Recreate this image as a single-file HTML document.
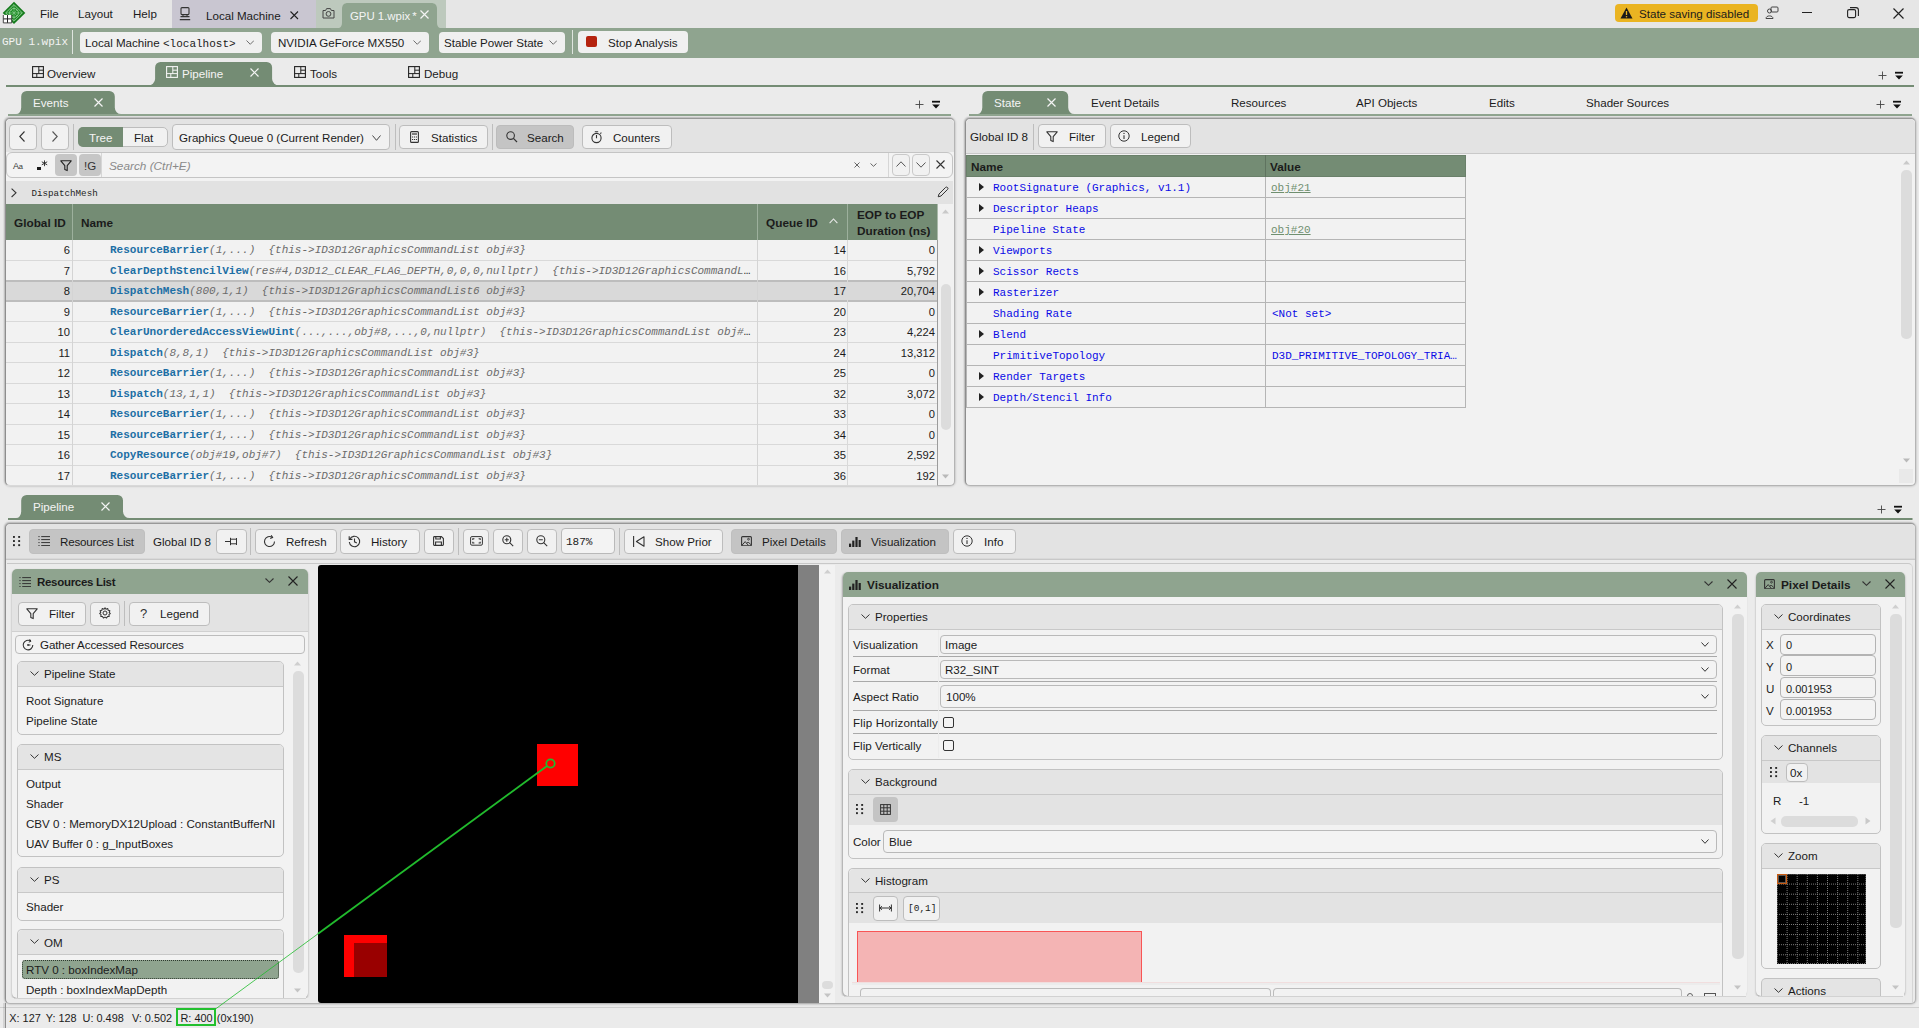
<!DOCTYPE html>
<html lang="en"><head><meta charset="utf-8"><title>PIX - GPU 1.wpix</title>
<style>
html,body{margin:0;padding:0}
body{width:1919px;height:1028px;overflow:hidden;background:#ebebeb;font-family:"Liberation Sans",sans-serif;font-size:12px;color:#1b1b1b;position:relative}
.abs{position:absolute}
.t{white-space:nowrap;line-height:16px;height:16px;font-size:11.6px}
.mono{font-family:"Liberation Mono","DejaVu Sans Mono",monospace;font-size:11px}
.b{font-weight:bold}
.wh{color:#f4f4f4}
.btn{border:1px solid #bdbdbd;border-radius:4px;background:#f1f1f1}
.btn.on{background:#c6c6c6;border-color:#c0c0c0}
.panel{border:1px solid #b4b4b4;border-left-color:#8e8e8e;border-top-color:#989898;border-radius:5px;background:#f2f2f2;box-shadow:0 0 2.5px rgba(0,0,0,.3),-1px -1px 1.5px rgba(0,0,0,.12)}
.grp{border:1px solid #c2c2c2;border-radius:5px;background:#f2f2f2;overflow:hidden}
.grph{background:#e4e4e4;border-bottom:1px solid #c8c8c8}
.inp{border:1px solid #b9b9b9;border-radius:4px;background:#f3f3f3}
.row{position:absolute;left:6px;width:931px;height:20px;border-bottom:1px solid #d9d9d9}
.row .id{position:absolute;right:867px;top:2px;font-size:11.2px}
.row .nm{position:absolute;left:104px;top:2px;width:642px;overflow:hidden;text-overflow:ellipsis}
.row .q{position:absolute;right:91px;top:2px;font-size:11.2px}
.row .e{position:absolute;right:2px;top:2px;font-size:11.2px}
.fn{color:#1d6fa5;font-weight:bold;font-style:normal}
.ar{color:#6b6b6b;font-style:italic}
.srow{position:absolute;left:966px;width:500px;height:20px;border-bottom:1px solid #b5b5b5;border-left:1px solid #b5b5b5;border-right:1px solid #b5b5b5;box-sizing:border-box;height:21px}
.srow .n{position:absolute;left:26px;top:3px;color:#0a0ae6}
.srow .v{position:absolute;left:305px;top:3px;color:#0a0ae6}
.srow .v.l{color:#6f8f6f;text-decoration:underline}
.srow .d{position:absolute;left:298px;top:0;width:1px;height:21px;background:#b5b5b5}
.srow .a{position:absolute;left:12px;top:6px;width:0;height:0;border-left:5px solid #222;border-top:4px solid transparent;border-bottom:4px solid transparent}
</style></head><body>

<div class="abs" style="left:0px;top:0px;width:1919px;height:28px;background:#e6e6e6"></div>
<svg class="abs" style="left:0px;top:0px" width="28" height="27" viewBox="0 0 28 27" >
<path d="M14 1.7 L25.3 12.9 L14 24.1 L2.7 12.9 Z" fill="#137a1a"/>
<path d="M14 4.6 L22.3 12.9 L14 21.2 L5.7 12.9 Z" fill="#1d8a24" stroke="#a5dba9" stroke-width="0.8"/>
<circle cx="14" cy="12.9" r="4.4" fill="none" stroke="#a5dba9" stroke-width="0.8"/>
<path d="M14 4.6 V21.2 M5.7 12.9 H22.3 M10.9 9.8 L17.1 16 M17.1 9.8 L10.9 16" stroke="#8fd094" stroke-width="0.6"/>
<rect x="3.3" y="14.9" width="8.4" height="8" fill="#ffffff"/>
<path d="M3.3 18.9 H11.7 M7.5 14.9 V22.9" stroke="#222" stroke-width="1"/>
<path d="M3.3 15 V22.9 H11.7 V15" stroke="#333" stroke-width="0.9" fill="none"/>
</svg>
<div class="abs t " style="left:40px;top:6px;">File</div>
<div class="abs t " style="left:78px;top:6px;">Layout</div>
<div class="abs t " style="left:133px;top:6px;">Help</div>
<div class="abs" style="left:172px;top:0px;width:144px;height:28px;background:#c9c6d1"></div>
<svg class="abs" style="left:179px;top:7px" width="12" height="14" viewBox="0 0 12 14" ><rect x="2" y="0.6" width="8" height="7" rx="1" fill="none" stroke="#333" stroke-width="1.1"/><path d="M1.5 9.6 H10.5 M0.8 12.6 H11.2" stroke="#333" stroke-width="1.2"/><path d="M4 7.6 V9.6 M8 7.6 V9.6" stroke="#333" stroke-width="1"/></svg>
<div class="abs t " style="left:206px;top:8px;">Local Machine</div>
<svg class="abs" style="left:290px;top:11px" width="8.5" height="8.5" viewBox="0 0 8.5 8.5" ><path d="M0.5 0.5 L8.0 8.0 M8.0 0.5 L0.5 8.0" stroke="#222" stroke-width="1.1" fill="none"/></svg>
<div class="abs" style="left:316px;top:0px;width:130px;height:28px;background:#bdc9bd"></div>
<svg class="abs" style="left:322px;top:7px" width="13" height="12" viewBox="0 0 13 12" ><path d="M1 3.5 H3.6 L4.6 1.6 H8.4 L9.4 3.5 H12 V11 H1 Z" fill="none" stroke="#444" stroke-width="1"/><circle cx="6.5" cy="6.9" r="2.4" fill="none" stroke="#444" stroke-width="1"/></svg>
<svg class="abs" style="left:0;top:0" width="460" height="29"><path d="M336 28.5 C341 28.5 342 26 342 22 L342 9 C342 5 344 3 348 3 L431 3 C435 3 437 5 437 9 L437 22 C437 26 438 28.5 443 28.5 Z" fill="#8fa48f"/></svg>
<div class="abs t wh" style="left:350px;top:8px;font-size:11.4px">GPU 1.wpix<span style="margin-left:2px">*</span></div>
<svg class="abs" style="left:420px;top:10px" width="9" height="9" viewBox="0 0 9 9" ><path d="M0.5 0.5 L8.5 8.5 M8.5 0.5 L0.5 8.5" stroke="#f4f4f4" stroke-width="1.2" fill="none"/></svg>
<div class="abs" style="left:1615px;top:4px;width:143px;height:18px;background:#eab422;border-radius:4px"></div>
<svg class="abs" style="left:1620px;top:7px" width="13" height="12" viewBox="0 0 13 12" ><path d="M6.5 0.5 L12.5 11.5 H0.5 Z" fill="#1a1a1a"/><path d="M6.5 4 V8" stroke="#eab422" stroke-width="1.3"/><circle cx="6.5" cy="9.7" r="0.8" fill="#eab422"/></svg>
<div class="abs t " style="left:1639px;top:5.5px;">State saving disabled</div>
<svg class="abs" style="left:1765px;top:6px" width="14" height="14" viewBox="0 0 14 14" ><rect x="6" y="1" width="7" height="5" rx="1" fill="none" stroke="#444" stroke-width="1"/><circle cx="4.5" cy="5" r="2" fill="none" stroke="#444" stroke-width="1"/><path d="M1 12.5 C1 9 8 9 8 12.5 Z" fill="none" stroke="#444" stroke-width="1"/></svg>
<div class="abs" style="left:1802px;top:12px;width:10px;height:1px;background:#222"></div>
<svg class="abs" style="left:1847px;top:7px" width="12" height="12" viewBox="0 0 12 12" ><rect x="0.6" y="2.6" width="8" height="8" rx="1.5" fill="none" stroke="#222" stroke-width="1.1"/><path d="M3 0.6 H9 Q11.4 0.6 11.4 3 V9" fill="none" stroke="#222" stroke-width="1.1"/></svg>
<svg class="abs" style="left:1893px;top:8px" width="11" height="11" viewBox="0 0 11 11" ><path d="M0.5 0.5 L10.5 10.5 M10.5 0.5 L0.5 10.5" stroke="#222" stroke-width="1.2" fill="none"/></svg>
<div class="abs" style="left:0px;top:28px;width:1919px;height:30px;background:#8fa48f"></div>
<div class="abs t mono" style="left:2px;top:34px;color:#f3f3f3;font-size:11px">GPU 1.wpix</div>
<div class="abs" style="left:72px;top:30px;width:1px;height:24px;background:#dfe5df"></div>
<div class="abs" style="left:80px;top:32px;width:182px;height:21px;background:#f0f0f0;border-radius:4px"></div><div class="abs t" style="left:85px;top:34.5px;font-size:11.6px">Local Machine <span class="mono" style="font-size:11px">&lt;localhost&gt;</span></div><svg class="abs" style="left:245.5px;top:40.0px" width="8.5" height="5" viewBox="0 0 8.5 5" ><path d="M0.5 0.5 L4.25 4.3 L8.0 0.5" stroke="#6f6f6f" stroke-width="1" fill="none"/></svg>
<div class="abs" style="left:271px;top:32px;width:158px;height:21px;background:#f0f0f0;border-radius:4px"></div><div class="abs t" style="left:278px;top:34.5px;font-size:11.6px">NVIDIA GeForce MX550</div><svg class="abs" style="left:412.5px;top:40.0px" width="8.5" height="5" viewBox="0 0 8.5 5" ><path d="M0.5 0.5 L4.25 4.3 L8.0 0.5" stroke="#6f6f6f" stroke-width="1" fill="none"/></svg>
<div class="abs" style="left:439px;top:32px;width:126px;height:21px;background:#f0f0f0;border-radius:4px"></div><div class="abs t" style="left:444px;top:34.5px;font-size:11.6px">Stable Power State</div><svg class="abs" style="left:548.5px;top:40.0px" width="8.5" height="5" viewBox="0 0 8.5 5" ><path d="M0.5 0.5 L4.25 4.3 L8.0 0.5" stroke="#6f6f6f" stroke-width="1" fill="none"/></svg>
<div class="abs" style="left:572px;top:30px;width:1px;height:24px;background:#dfe5df"></div>
<div class="abs" style="left:578px;top:31px;width:110px;height:22px;background:#f0f0f0;border-radius:4px"></div>
<div class="abs" style="left:586px;top:36px;width:11px;height:11px;background:#b5230f;border-radius:2px"></div>
<div class="abs t " style="left:608px;top:35px;">Stop Analysis</div>
<div class="abs" style="left:6px;top:85px;width:1908px;height:2px;background:#748c74"></div>
<svg class="abs" style="left:32px;top:66px" width="12" height="12" viewBox="0 0 12 12" ><rect x="0.6" y="0.6" width="10.8" height="10.8" fill="none" stroke="#222" stroke-width="1.1"/><path d="M6.8 0.6 V7.6 M0.6 7.6 H11.4 M4.8 7.6 V11.4 M6.8 4.2 H11.4" stroke="#222" stroke-width="1" fill="none"/></svg>
<div class="abs t " style="left:47px;top:65.5px;">Overview</div>
<svg class="abs" style="left:0;top:0" width="300" height="87"><path d="M147.6 85.5 A7.5 6.4 0 0 0 155.1 79.1 V67.4 A5.4 5.4 0 0 1 160.5 62 H266.70000000000005 A5.4 5.4 0 0 1 272.1 67.4 V79.1 A7.5 6.4 0 0 0 279.6 85.5 Z" fill="#748c74"/></svg>
<svg class="abs" style="left:166px;top:66px" width="12" height="12" viewBox="0 0 12 12" ><rect x="0.6" y="0.6" width="10.8" height="10.8" fill="none" stroke="#f4f4f4" stroke-width="1.1"/><path d="M6.8 0.6 V7.6 M0.6 7.6 H11.4 M4.8 7.6 V11.4 M6.8 4.2 H11.4" stroke="#f4f4f4" stroke-width="1" fill="none"/></svg>
<div class="abs t wh" style="left:182px;top:65.5px;">Pipeline</div>
<svg class="abs" style="left:250px;top:68px" width="9" height="9" viewBox="0 0 9 9" ><path d="M0.5 0.5 L8.5 8.5 M8.5 0.5 L0.5 8.5" stroke="#f4f4f4" stroke-width="1.2" fill="none"/></svg>
<svg class="abs" style="left:294px;top:66px" width="12" height="12" viewBox="0 0 12 12" ><rect x="0.6" y="0.6" width="10.8" height="10.8" fill="none" stroke="#222" stroke-width="1.1"/><path d="M6.8 0.6 V7.6 M0.6 7.6 H11.4 M4.8 7.6 V11.4 M6.8 4.2 H11.4" stroke="#222" stroke-width="1" fill="none"/></svg>
<div class="abs t " style="left:310px;top:65.5px;">Tools</div>
<svg class="abs" style="left:408px;top:66px" width="12" height="12" viewBox="0 0 12 12" ><rect x="0.6" y="0.6" width="10.8" height="10.8" fill="none" stroke="#222" stroke-width="1.1"/><path d="M6.8 0.6 V7.6 M0.6 7.6 H11.4 M4.8 7.6 V11.4 M6.8 4.2 H11.4" stroke="#222" stroke-width="1" fill="none"/></svg>
<div class="abs t " style="left:424px;top:65.5px;">Debug</div>
<svg class="abs" style="left:1878px;top:71px" width="9" height="9" viewBox="0 0 9 9" ><path d="M4.5 0.5 V8.5 M0.5 4.5 H8.5" stroke="#444" stroke-width="0.9" fill="none"/></svg><svg class="abs" style="left:1895px;top:71px" width="8" height="9" viewBox="0 0 8 9" ><path d="M0 1.7 H8" stroke="#111" stroke-width="1.8"/><path d="M0.2 4.5 H7.8 L4 8.6 Z" fill="#111"/></svg>
<svg class="abs" style="left:0;top:88px" width="960" height="28"><path d="M16.2 26 A5 6.4 0 0 0 21.2 19.6 V8.4 A5.4 5.4 0 0 1 26.6 3 H109.39999999999999 A5.4 5.4 0 0 1 114.8 8.4 V19.6 A6.3 6.4 0 0 0 121.1 26 Z" fill="#748c74"/><rect x="8" y="26" width="943" height="2" fill="#8fa48f"/></svg>
<div class="abs t wh" style="left:33px;top:95px;">Events</div>
<svg class="abs" style="left:94px;top:98px" width="9" height="9" viewBox="0 0 9 9" ><path d="M0.5 0.5 L8.5 8.5 M8.5 0.5 L0.5 8.5" stroke="#f4f4f4" stroke-width="1.2" fill="none"/></svg>
<svg class="abs" style="left:915px;top:100px" width="9" height="9" viewBox="0 0 9 9" ><path d="M4.5 0.5 V8.5 M0.5 4.5 H8.5" stroke="#444" stroke-width="0.9" fill="none"/></svg><svg class="abs" style="left:932px;top:100px" width="8" height="9" viewBox="0 0 8 9" ><path d="M0 1.7 H8" stroke="#111" stroke-width="1.8"/><path d="M0.2 4.5 H7.8 L4 8.6 Z" fill="#111"/></svg>
<div class="abs panel" style="left:5px;top:118px;width:948px;height:366px;overflow:hidden">
</div>
<div class="abs" style="left:6px;top:119px;width:948px;height:33px;background:#e3e3e3;border-radius:5px 5px 0 0"></div>
<div class="abs btn" style="left:9px;top:124px;width:26px;height:24px;"></div>
<svg class="abs" style="left:19px;top:131px" width="6" height="11" viewBox="0 0 6 11" ><path d="M5.5 0.5 L0.8 5.5 L5.5 10.5" fill="none" stroke="#333" stroke-width="1.1"/></svg>
<div class="abs btn" style="left:41px;top:124px;width:26px;height:24px;"></div>
<svg class="abs" style="left:52px;top:131px" width="6" height="11" viewBox="0 0 6 11" ><path d="M0.5 0.5 L5.2 5.5 L0.5 10.5" fill="none" stroke="#555" stroke-width="1.1"/></svg>
<div class="abs" style="left:73px;top:124px;width:1px;height:26px;background:#bdbdbd"></div>
<div class="abs" style="left:78px;top:127px;width:90px;height:20px;border:1px solid #bdbdbd;border-radius:5px;background:#f1f1f1;box-sizing:border-box"></div>
<div class="abs" style="left:78px;top:127px;width:45px;height:20px;background:#748c74;border-radius:5px 0 0 5px"></div>
<div class="abs t wh" style="left:89px;top:129.5px;">Tree</div>
<div class="abs t " style="left:134px;top:129.5px;">Flat</div>
<div class="abs btn" style="left:172px;top:124px;width:216px;height:24px;"></div>
<div class="abs t " style="left:179px;top:129.5px;">Graphics Queue 0 (Current Render)</div>
<svg class="abs" style="left:372px;top:135px" width="9" height="6" viewBox="0 0 9 6" ><path d="M0.5 0.5 L4.5 5.3 L8.5 0.5" stroke="#444" stroke-width="1" fill="none"/></svg>
<div class="abs" style="left:395px;top:124px;width:1px;height:26px;background:#bdbdbd"></div>
<div class="abs btn" style="left:399px;top:125px;width:87px;height:22px;"></div>
<svg class="abs" style="left:410px;top:131px" width="9" height="12" viewBox="0 0 9 12" ><rect x="0.6" y="0.6" width="7.8" height="10.8" rx="1" fill="none" stroke="#333" stroke-width="1.1"/><path d="M2 3 H7" stroke="#333" stroke-width="1.2"/><path d="M2 6 H7 M2 8.5 H7" stroke="#333" stroke-width="1.2" stroke-dasharray="1.2 0.8"/></svg>
<div class="abs t " style="left:431px;top:129.5px;">Statistics</div>
<div class="abs" style="left:492px;top:124px;width:1px;height:26px;background:#bdbdbd"></div>
<div class="abs btn" style="left:496px;top:125px;width:76px;height:22px;background:#c4c4c4;border-color:#bcbcbc"></div>
<svg class="abs" style="left:506px;top:131px" width="12" height="12" viewBox="0 0 12 12" ><circle cx="4.6" cy="4.6" r="3.8" fill="none" stroke="#333" stroke-width="1.1"/><path d="M7.4 7.4 L11 11" stroke="#333" stroke-width="1.2"/></svg>
<div class="abs t " style="left:527px;top:129.5px;">Search</div>
<div class="abs btn" style="left:582px;top:125px;width:88px;height:22px;"></div>
<svg class="abs" style="left:591px;top:131px" width="12" height="13" viewBox="0 0 12 13" ><circle cx="5.5" cy="7" r="4.6" fill="none" stroke="#333" stroke-width="1.1"/><path d="M5.5 4 V7.2 M3.8 0.7 H7.2 M9.3 2.6 L10.4 1.6" stroke="#333" stroke-width="1.1" fill="none"/></svg>
<div class="abs t " style="left:613px;top:129.5px;">Counters</div>
<div class="abs" style="left:6px;top:152px;width:947px;height:26px;border:1px solid #c4c4c4;border-radius:6px;background:#f3f3f3;box-sizing:border-box"></div>
<div class="abs t " style="left:13px;top:157.5px;font-size:9px;color:#333;letter-spacing:-0.3px">A<span style="font-size:7.5px">a</span></div>
<div class="abs" style="left:37.2px;top:166.5px;width:3.4px;height:3.2px;background:#1a1a1a"></div>
<svg class="abs" style="left:41px;top:160px" width="7" height="7" viewBox="0 0 7 7" ><path d="M3.5 0.4 V6.2 M0.8 1.8 L6.2 4.8 M6.2 1.8 L0.8 4.8" stroke="#222" stroke-width="0.9" fill="none"/></svg>
<div class="abs" style="left:55px;top:154px;width:22px;height:22px;background:#c6c6c6;border-radius:4px"></div>
<svg class="abs" style="left:60px;top:160px" width="12" height="12" viewBox="0 0 12 12" ><path d="M0.8 0.8 H11.2 L7.2 5.6 V10.6 L4.8 9.4 V5.6 Z" fill="none" stroke="#222" stroke-width="1.1" stroke-linejoin="round"/></svg>
<div class="abs" style="left:79px;top:154px;width:22px;height:22px;background:#c6c6c6;border-radius:4px"></div>
<div class="abs t " style="left:84px;top:157.5px;font-size:11.5px;color:#333">!G</div>
<div class="abs" style="left:101px;top:153px;width:1px;height:24px;background:#d6d6d6"></div>
<div class="abs t " style="left:109px;top:157.5px;font-style:italic;color:#8a8a8a;font-size:11.8px">Search (Ctrl+E)</div>
<svg class="abs" style="left:854px;top:162px" width="6" height="6" viewBox="0 0 6 6" ><path d="M0.5 0.5 L5.5 5.5 M5.5 0.5 L0.5 5.5" stroke="#555" stroke-width="0.9" fill="none"/></svg>
<svg class="abs" style="left:870px;top:163px" width="7" height="4" viewBox="0 0 7 4" ><path d="M0.5 0.5 L3.5 3.3 L6.5 0.5" stroke="#555" stroke-width="0.9" fill="none"/></svg>
<div class="abs" style="left:888px;top:153px;width:1px;height:24px;background:#d6d6d6"></div>
<div class="abs btn" style="left:892px;top:154px;width:16px;height:20px;border-color:#c9c9c9"></div>
<svg class="abs" style="left:896px;top:161px" width="10" height="6" viewBox="0 0 10 6" ><path d="M0.5 5.5 L5 0.8 L9.5 5.5" fill="none" stroke="#555" stroke-width="1"/></svg>
<div class="abs btn" style="left:912px;top:154px;width:16px;height:20px;border-color:#c9c9c9"></div>
<svg class="abs" style="left:916px;top:162px" width="10" height="6" viewBox="0 0 10 6" ><path d="M0.5 0.5 L5 5.2 L9.5 0.5" fill="none" stroke="#555" stroke-width="1"/></svg>
<svg class="abs" style="left:936px;top:160px" width="9" height="9" viewBox="0 0 9 9" ><path d="M0.5 0.5 L8.5 8.5 M8.5 0.5 L0.5 8.5" stroke="#333" stroke-width="1.1" fill="none"/></svg>
<div class="abs" style="left:6px;top:181px;width:947px;height:23px;background:#e2e2e2"></div>
<svg class="abs" style="left:11.4px;top:188.3px" width="6" height="10" viewBox="0 0 6 10" ><path d="M0.6 0.6 L5 4.8 L0.6 9" fill="none" stroke="#333" stroke-width="1.1"/></svg>
<div class="abs t mono" style="left:31.5px;top:186px;font-size:9.2px;color:#222">DispatchMesh</div>
<svg class="abs" style="left:937px;top:186px" width="12" height="12" viewBox="0 0 12 12" ><path d="M1.2 10.8 L2 8 L8.6 1.4 Q9.6 0.6 10.6 1.6 Q11.4 2.6 10.6 3.4 L4 10 Z" fill="none" stroke="#333" stroke-width="1"/></svg>
<div class="abs" style="left:6px;top:204px;width:931px;height:36px;background:#748c74"></div>
<div class="abs" style="left:72px;top:204px;width:1px;height:36px;background:#9db09d"></div>
<div class="abs" style="left:757px;top:204px;width:1px;height:36px;background:#9db09d"></div>
<div class="abs" style="left:847px;top:204px;width:1px;height:36px;background:#9db09d"></div>
<div class="abs t b" style="left:14px;top:214.5px;font-size:11.8px">Global ID</div>
<div class="abs t b" style="left:81px;top:214.5px;font-size:11.8px">Name</div>
<div class="abs t b" style="left:766px;top:214.5px;font-size:11.8px">Queue ID</div>
<svg class="abs" style="left:829px;top:218px" width="9" height="6" viewBox="0 0 9 6" ><path d="M0.6 5.2 L4.5 1 L8.4 5.2" fill="none" stroke="#e8e8e8" stroke-width="1.1"/></svg>
<div class="abs t b" style="left:857px;top:207px;font-size:11.8px">EOP to EOP</div>
<div class="abs t b" style="left:857px;top:222.5px;font-size:11.8px">Duration (ns)</div>
<div class="row" style="top:240px;height:20px;"><span class="id t" style="">6</span><span class="nm t mono" style="white-space:pre;"><span class="fn">ResourceBarrier</span><span class="ar">(1,...)  {this-&gt;ID3D12GraphicsCommandList obj#3}</span></span><span class="q t" style="">14</span><span class="e t" style="">0</span></div>
<div class="row" style="top:261px;height:19px;"><span class="id t" style="">7</span><span class="nm t mono" style="white-space:pre;"><span class="fn">ClearDepthStencilView</span><span class="ar">(res#4,D3D12_CLEAR_FLAG_DEPTH,0,0,0,nullptr)  {this-&gt;ID3D12GraphicsCommandList obj#3}</span></span><span class="q t" style="">16</span><span class="e t" style="">5,792</span></div>
<div class="row" style="top:280px;height:18px;background:#d9d9d9;border-top:2px solid #bdbdbd;border-bottom:2px solid #bdbdbd;"><span class="id t" style="top:1px">8</span><span class="nm t mono" style="white-space:pre;top:1px"><span class="fn">DispatchMesh</span><span class="ar">(800,1,1)  {this-&gt;ID3D12GraphicsCommandList6 obj#3}</span></span><span class="q t" style="top:1px">17</span><span class="e t" style="top:1px">20,704</span></div>
<div class="row" style="top:302px;height:19px;"><span class="id t" style="">9</span><span class="nm t mono" style="white-space:pre;"><span class="fn">ResourceBarrier</span><span class="ar">(1,...)  {this-&gt;ID3D12GraphicsCommandList obj#3}</span></span><span class="q t" style="">20</span><span class="e t" style="">0</span></div>
<div class="row" style="top:322px;height:20px;"><span class="id t" style="">10</span><span class="nm t mono" style="white-space:pre;"><span class="fn">ClearUnorderedAccessViewUint</span><span class="ar">(...,...,obj#8,...,0,nullptr)  {this-&gt;ID3D12GraphicsCommandList obj#3}</span></span><span class="q t" style="">23</span><span class="e t" style="">4,224</span></div>
<div class="row" style="top:343px;height:19px;"><span class="id t" style="">11</span><span class="nm t mono" style="white-space:pre;"><span class="fn">Dispatch</span><span class="ar">(8,8,1)  {this-&gt;ID3D12GraphicsCommandList obj#3}</span></span><span class="q t" style="">24</span><span class="e t" style="">13,312</span></div>
<div class="row" style="top:363px;height:20px;"><span class="id t" style="">12</span><span class="nm t mono" style="white-space:pre;"><span class="fn">ResourceBarrier</span><span class="ar">(1,...)  {this-&gt;ID3D12GraphicsCommandList obj#3}</span></span><span class="q t" style="">25</span><span class="e t" style="">0</span></div>
<div class="row" style="top:384px;height:19px;"><span class="id t" style="">13</span><span class="nm t mono" style="white-space:pre;"><span class="fn">Dispatch</span><span class="ar">(13,1,1)  {this-&gt;ID3D12GraphicsCommandList obj#3}</span></span><span class="q t" style="">32</span><span class="e t" style="">3,072</span></div>
<div class="row" style="top:404px;height:20px;"><span class="id t" style="">14</span><span class="nm t mono" style="white-space:pre;"><span class="fn">ResourceBarrier</span><span class="ar">(1,...)  {this-&gt;ID3D12GraphicsCommandList obj#3}</span></span><span class="q t" style="">33</span><span class="e t" style="">0</span></div>
<div class="row" style="top:425px;height:19px;"><span class="id t" style="">15</span><span class="nm t mono" style="white-space:pre;"><span class="fn">ResourceBarrier</span><span class="ar">(1,...)  {this-&gt;ID3D12GraphicsCommandList obj#3}</span></span><span class="q t" style="">34</span><span class="e t" style="">0</span></div>
<div class="row" style="top:445px;height:20px;"><span class="id t" style="">16</span><span class="nm t mono" style="white-space:pre;"><span class="fn">CopyResource</span><span class="ar">(obj#19,obj#7)  {this-&gt;ID3D12GraphicsCommandList obj#3}</span></span><span class="q t" style="">35</span><span class="e t" style="">2,592</span></div>
<div class="row" style="top:466px;height:19px;"><span class="id t" style="">17</span><span class="nm t mono" style="white-space:pre;"><span class="fn">ResourceBarrier</span><span class="ar">(1,...)  {this-&gt;ID3D12GraphicsCommandList obj#3}</span></span><span class="q t" style="">36</span><span class="e t" style="">192</span></div>
<div class="abs" style="left:72px;top:240px;width:1px;height:245px;background:#d4d4d4"></div>
<div class="abs" style="left:757px;top:240px;width:1px;height:245px;background:#d4d4d4"></div>
<div class="abs" style="left:847px;top:240px;width:1px;height:245px;background:#d9d9d9"></div>
<div class="abs" style="left:937px;top:204px;width:1px;height:36px;background:#a9b8a9"></div>
<div class="abs" style="left:937px;top:240px;width:1px;height:245px;background:#9c9c9c"></div>
<div class="abs" style="left:938px;top:204px;width:15px;height:280px;background:#f1f1f1;border-radius:0 0 4px 0"></div>
<svg class="abs" style="left:942px;top:209px" width="7" height="5" viewBox="0 0 7 5" ><path d="M3.5 0.5 L7 4.5 H0 Z" fill="#c9c9c9"/></svg>
<svg class="abs" style="left:942px;top:474px" width="7" height="5" viewBox="0 0 7 5" ><path d="M3.5 4.5 L7 0.5 H0 Z" fill="#b9b9b9"/></svg>
<div class="abs" style="left:941px;top:284px;width:10px;height:146px;background:#dcdcdc;border-radius:5px"></div>
<svg class="abs" style="left:960px;top:88px" width="959" height="28"><path d="M17.3 26 A5 6.4 0 0 0 22.3 19.6 V8.4 A5.4 5.4 0 0 1 27.700000000000003 3 H102.8 A5.4 5.4 0 0 1 108.2 8.4 V19.6 A6 6.4 0 0 0 114.2 26 Z" fill="#748c74"/><rect x="9" y="26" width="943" height="2" fill="#8fa48f"/></svg>
<div class="abs t wh" style="left:994px;top:95px;">State</div>
<svg class="abs" style="left:1047px;top:98px" width="9" height="9" viewBox="0 0 9 9" ><path d="M0.5 0.5 L8.5 8.5 M8.5 0.5 L0.5 8.5" stroke="#f4f4f4" stroke-width="1.2" fill="none"/></svg>
<div class="abs t " style="left:1091px;top:95px;">Event Details</div>
<div class="abs t " style="left:1231px;top:95px;">Resources</div>
<div class="abs t " style="left:1356px;top:95px;">API Objects</div>
<div class="abs t " style="left:1489px;top:95px;">Edits</div>
<div class="abs t " style="left:1586px;top:95px;">Shader Sources</div>
<svg class="abs" style="left:1876px;top:100px" width="9" height="9" viewBox="0 0 9 9" ><path d="M4.5 0.5 V8.5 M0.5 4.5 H8.5" stroke="#444" stroke-width="0.9" fill="none"/></svg><svg class="abs" style="left:1893px;top:100px" width="8" height="9" viewBox="0 0 8 9" ><path d="M0 1.7 H8" stroke="#111" stroke-width="1.8"/><path d="M0.2 4.5 H7.8 L4 8.6 Z" fill="#111"/></svg>
<div class="abs panel" style="left:965px;top:118px;width:949px;height:366px"></div>
<div class="abs" style="left:966px;top:119px;width:949px;height:34px;background:#e3e3e3;border-radius:5px 5px 0 0;border-bottom:1px solid #c9c9c9"></div>
<div class="abs t " style="left:970px;top:129px;">Global ID 8</div>
<div class="abs" style="left:1033px;top:124px;width:1px;height:26px;background:#bdbdbd"></div>
<div class="abs btn" style="left:1038px;top:124px;width:66px;height:22px;"></div>
<svg class="abs" style="left:1046px;top:131px" width="12" height="12" viewBox="0 0 12 12" ><path d="M0.8 0.8 H11.2 L7.2 5.6 V10.6 L4.8 9.4 V5.6 Z" fill="none" stroke="#333" stroke-width="1.1" stroke-linejoin="round"/></svg>
<div class="abs t " style="left:1069px;top:129px;">Filter</div>
<div class="abs btn" style="left:1110px;top:124px;width:79px;height:22px;"></div>
<svg class="abs" style="left:1118px;top:130px" width="12" height="12" viewBox="0 0 12 12" ><circle cx="6" cy="6" r="5.2" fill="none" stroke="#333" stroke-width="1"/><path d="M6 5.2 V9" stroke="#333" stroke-width="1.1"/><circle cx="6" cy="3.4" r="0.7" fill="#333"/></svg>
<div class="abs t " style="left:1141px;top:129px;">Legend</div>
<div class="abs" style="left:966px;top:155px;width:500px;height:22px;background:#748c74;border:1px solid #6a806a;box-sizing:border-box"></div>
<div class="abs" style="left:1265px;top:155px;width:1px;height:22px;background:#5f735f"></div>
<div class="abs t b" style="left:971px;top:159px;font-size:11.8px">Name</div>
<div class="abs t b" style="left:1270px;top:159px;font-size:11.8px">Value</div>
<div class="srow" style="top:177px"><span class="a"></span><span class="n t mono">RootSignature (Graphics, v1.1)</span><span class="d"></span><span class="v t mono l" style="left:304px">obj#21</span></div>
<div class="srow" style="top:198px"><span class="a"></span><span class="n t mono">Descriptor Heaps</span><span class="d"></span></div>
<div class="srow" style="top:219px"><span class="n t mono">Pipeline State</span><span class="d"></span><span class="v t mono l" style="left:304px">obj#20</span></div>
<div class="srow" style="top:240px"><span class="a"></span><span class="n t mono">Viewports</span><span class="d"></span></div>
<div class="srow" style="top:261px"><span class="a"></span><span class="n t mono">Scissor Rects</span><span class="d"></span></div>
<div class="srow" style="top:282px"><span class="a"></span><span class="n t mono">Rasterizer</span><span class="d"></span></div>
<div class="srow" style="top:303px"><span class="n t mono">Shading Rate</span><span class="d"></span><span class="v t mono " style="left:305px">&lt;Not set&gt;</span></div>
<div class="srow" style="top:324px"><span class="a"></span><span class="n t mono">Blend</span><span class="d"></span></div>
<div class="srow" style="top:345px"><span class="n t mono">PrimitiveTopology</span><span class="d"></span><span class="v t mono " style="left:305px">D3D_PRIMITIVE_TOPOLOGY_TRIA…</span></div>
<div class="srow" style="top:366px"><span class="a"></span><span class="n t mono">Render Targets</span><span class="d"></span></div>
<div class="srow" style="top:387px"><span class="a"></span><span class="n t mono">Depth/Stencil Info</span><span class="d"></span></div>
<svg class="abs" style="left:1903px;top:160px" width="7" height="5" viewBox="0 0 7 5" ><path d="M3.5 0.5 L7 4.5 H0 Z" fill="#c9c9c9"/></svg>
<svg class="abs" style="left:1903px;top:458px" width="7" height="5" viewBox="0 0 7 5" ><path d="M3.5 4.5 L7 0.5 H0 Z" fill="#b9b9b9"/></svg>
<div class="abs" style="left:1901px;top:170px;width:11px;height:169px;background:#dcdcdc;border-radius:5px"></div>
<div class="abs" style="left:1899px;top:469px;width:14px;height:14px;background:#e9e9e9"></div>
<svg class="abs" style="left:0;top:492px" width="1919" height="29"><path d="M16.2 26 A5 6.4 0 0 0 21.2 19.6 V8.4 A5.4 5.4 0 0 1 26.6 3 H117.6 A5.4 5.4 0 0 1 123 8.4 V19.6 A6.5 6.4 0 0 0 129.5 26 Z" fill="#748c74"/><rect x="8" y="26" width="1904.5" height="2" fill="#748c74"/></svg>
<div class="abs t wh" style="left:33px;top:499px;">Pipeline</div>
<svg class="abs" style="left:101px;top:502px" width="9" height="9" viewBox="0 0 9 9" ><path d="M0.5 0.5 L8.5 8.5 M8.5 0.5 L0.5 8.5" stroke="#f4f4f4" stroke-width="1.2" fill="none"/></svg>
<svg class="abs" style="left:1876.5px;top:504.5px" width="9" height="9" viewBox="0 0 9 9" ><path d="M4.5 0.5 V8.5 M0.5 4.5 H8.5" stroke="#444" stroke-width="0.9" fill="none"/></svg><svg class="abs" style="left:1893.5px;top:504.5px" width="8" height="9" viewBox="0 0 8 9" ><path d="M0 1.7 H8" stroke="#111" stroke-width="1.8"/><path d="M0.2 4.5 H7.8 L4 8.6 Z" fill="#111"/></svg>
<div class="abs panel" style="left:5px;top:523px;width:1909px;height:479px;background:#ebebeb"></div>
<div class="abs" style="left:6px;top:524px;width:1909px;height:34px;background:#e3e3e3;border-radius:5px 5px 0 0"></div>
<div class="abs" style="left:6px;top:558px;width:1909px;height:1px;background:#d9d9d9"></div>
<div class="abs" style="left:6px;top:559px;width:1909px;height:1px;background:#c8c8c8"></div>
<div class="abs" style="left:6px;top:560px;width:1909px;height:3px;background:#ebebeb"></div>
<div class="abs" style="left:7px;top:563px;width:1906px;height:440px;border-top:1px solid #c8c8c8;border-right:1px solid #d6d6d6;border-radius:0 5px 0 0;box-sizing:border-box"></div>
<svg class="abs" style="left:13px;top:536px" width="8" height="11" viewBox="0 0 8 11" ><rect x="0" y="0" width="1.9" height="1.9" fill="#2a2a2a"/><rect x="5.2" y="0" width="1.9" height="1.9" fill="#2a2a2a"/><rect x="0" y="4.1" width="1.9" height="1.9" fill="#2a2a2a"/><rect x="5.2" y="4.1" width="1.9" height="1.9" fill="#2a2a2a"/><rect x="0" y="8.2" width="1.9" height="1.9" fill="#2a2a2a"/><rect x="5.2" y="8.2" width="1.9" height="1.9" fill="#2a2a2a"/></svg>
<div class="abs btn" style="left:29px;top:529px;width:114px;height:23px;background:#c4c4c4;border-color:#bfbfbf"></div>
<svg class="abs" style="left:38px;top:536px" width="12" height="10.2" viewBox="0 0 12 10.2" ><path d="M3.2 0.6 H12 M0.4 0.6 H1.6 M3.2 3.6 H12 M0.4 3.6 H1.6 M3.2 6.6 H12 M0.4 6.6 H1.6 M3.2 9.6 H12 M0.4 9.6 H1.6 " stroke="#333" stroke-width="1"/></svg>
<div class="abs t " style="left:60px;top:534px;letter-spacing:-0.2px">Resources List</div>
<div class="abs t " style="left:153px;top:534px;">Global ID 8</div>
<div class="abs btn" style="left:216px;top:529px;width:29px;height:23px;"></div>
<svg class="abs" style="left:225px;top:536.5px" width="13" height="9" viewBox="0 0 13 9" ><path d="M0 4.5 H5.5 M5.5 0.8 V8.2 M5.5 2.2 H11.5 M5.5 6.8 H11.5 M11.5 1 V8" fill="none" stroke="#333" stroke-width="1"/></svg>
<div class="abs" style="left:250px;top:528px;width:1px;height:27px;background:#bdbdbd"></div>
<div class="abs btn" style="left:255px;top:529px;width:80px;height:23px;"></div>
<svg class="abs" style="left:263px;top:534.5px" width="13" height="13" viewBox="0 0 13 13" ><path d="M11.5 6.5 A5 5 0 1 1 9.2 2.3" fill="none" stroke="#333" stroke-width="1.1"/><path d="M8.2 0.3 L9.6 2.5 L7.2 3.4" fill="none" stroke="#333" stroke-width="1.1"/></svg>
<div class="abs t " style="left:286px;top:534px;">Refresh</div>
<div class="abs btn" style="left:340px;top:529px;width:78px;height:23px;"></div>
<svg class="abs" style="left:348px;top:534.5px" width="13" height="13" viewBox="0 0 13 13" ><path d="M1.8 4.2 A5.2 5.2 0 1 1 1.3 7" fill="none" stroke="#333" stroke-width="1.1"/><path d="M1.2 1.2 V4.4 H4.4" fill="none" stroke="#333" stroke-width="1.1"/><path d="M6.5 3.5 V6.8 L8.8 8" fill="none" stroke="#333" stroke-width="1.1"/></svg>
<div class="abs t " style="left:371px;top:534px;">History</div>
<div class="abs btn" style="left:424px;top:529px;width:28px;height:23px;"></div>
<svg class="abs" style="left:433.3px;top:536.3px" width="11" height="10" viewBox="0 0 11 10" ><path d="M0.6 1.4 Q0.6 0.6 1.4 0.6 H8.4 L10.4 2.6 V8.6 Q10.4 9.4 9.6 9.4 H1.4 Q0.6 9.4 0.6 8.6 Z" fill="none" stroke="#333" stroke-width="1.1"/><path d="M2.8 0.6 V3 H7.4 V0.6 M2.6 9.4 V6 H8.4 V9.4" fill="none" stroke="#333" stroke-width="1.1"/></svg>
<div class="abs" style="left:458px;top:528px;width:1px;height:27px;background:#bdbdbd"></div>
<div class="abs btn" style="left:463px;top:529px;width:24px;height:23px;"></div>
<svg class="abs" style="left:469.5px;top:536.3px" width="13" height="10" viewBox="0 0 13 10" ><rect x="0.6" y="0.6" width="11.8" height="8.6" rx="1.3" fill="none" stroke="#333" stroke-width="1"/><path d="M2.8 4 V2.8 H4.4 M8.6 2.8 H10.2 V4 M10.2 5.8 V7 H8.6 M4.4 7 H2.8 V5.8" fill="none" stroke="#333" stroke-width="1.1"/></svg>
<div class="abs btn" style="left:493px;top:529px;width:28px;height:23px;"></div>
<svg class="abs" style="left:502px;top:535px" width="12" height="12" viewBox="0 0 12 12" ><circle cx="4.8" cy="4.8" r="4" fill="none" stroke="#333" stroke-width="1.1"/><path d="M7.7 7.7 L11.2 11.2 M2.8 4.8 H6.8 M4.8 2.8 V6.8" stroke="#333" stroke-width="1.1"/></svg>
<div class="abs btn" style="left:527px;top:529px;width:28px;height:23px;"></div>
<svg class="abs" style="left:536px;top:535px" width="12" height="12" viewBox="0 0 12 12" ><circle cx="4.8" cy="4.8" r="4" fill="none" stroke="#333" stroke-width="1.1"/><path d="M7.7 7.7 L11.2 11.2 M2.8 4.8 H6.8" stroke="#333" stroke-width="1.1"/></svg>
<div class="abs" style="left:561px;top:528px;width:54px;height:26px;border:1px solid #b9b9b9;border-radius:4px;background:#f3f3f3;box-sizing:border-box"></div>
<div class="abs t mono" style="left:566px;top:534px;font-size:11px">187%</div>
<div class="abs" style="left:619px;top:528px;width:1px;height:27px;background:#bdbdbd"></div>
<div class="abs btn" style="left:624px;top:529px;width:97px;height:23px;"></div>
<svg class="abs" style="left:633px;top:536px" width="12" height="11" viewBox="0 0 12 11" ><path d="M0.6 0 V11" stroke="#333" stroke-width="1.1"/><path d="M11 0.8 V10.2 L3.4 5.5 Z" fill="none" stroke="#333" stroke-width="1.1" stroke-linejoin="round"/></svg>
<div class="abs t " style="left:655px;top:534px;">Show Prior</div>
<div class="abs btn" style="left:731px;top:529px;width:104px;height:23px;background:#c4c4c4;border-color:#bfbfbf"></div>
<svg class="abs" style="left:740.8px;top:535.8px" width="11" height="10.4" viewBox="0 0 11 10.4" ><rect x="0.6" y="0.6" width="9.8" height="9.2" rx="1" fill="none" stroke="#333" stroke-width="1.1"/><path d="M1 9.2 L4.2 5.6 L7.4 9.4 M5.8 7.4 L7.2 6 L10 8.8" fill="none" stroke="#333" stroke-width="1"/><circle cx="7.5" cy="3.2" r="0.9" fill="none" stroke="#333" stroke-width="0.9"/></svg>
<div class="abs t " style="left:762px;top:534px;">Pixel Details</div>
<div class="abs btn" style="left:841px;top:529px;width:106px;height:23px;background:#c4c4c4;border-color:#bfbfbf"></div>
<svg class="abs" style="left:849.3px;top:536.8px" width="12" height="10" viewBox="0 0 12 10" ><rect x="0" y="6.6" width="2.2" height="3.4" fill="#222"/><rect x="3.2" y="3.6" width="2.2" height="6.4" fill="#222"/><rect x="6.4" y="0" width="2.2" height="10" fill="#222"/><rect x="9.6" y="3" width="2.2" height="7" fill="#222"/></svg>
<div class="abs t " style="left:871px;top:534px;">Visualization</div>
<div class="abs btn" style="left:953px;top:529px;width:61px;height:23px;"></div>
<svg class="abs" style="left:961px;top:535px" width="12" height="12" viewBox="0 0 12 12" ><circle cx="6" cy="6" r="5.2" fill="none" stroke="#333" stroke-width="1"/><path d="M6 5.2 V9" stroke="#333" stroke-width="1.1"/><circle cx="6" cy="3.4" r="0.7" fill="#333"/></svg>
<div class="abs t " style="left:984px;top:534px;">Info</div>
<div class="abs" style="left:12px;top:569px;width:296px;height:429px;background:#f2f2f2;border-radius:5px;box-shadow:0 1px 2px rgba(0,0,0,.35);overflow:hidden"></div>
<div class="abs" style="left:12px;top:569px;width:296px;height:25px;background:#8fa48f;border-radius:5px 5px 0 0"></div>
<svg class="abs" style="left:19px;top:576.5px" width="12" height="10.2" viewBox="0 0 12 10.2" ><path d="M3.2 0.6 H12 M0.4 0.6 H1.6 M3.2 3.6 H12 M0.4 3.6 H1.6 M3.2 6.6 H12 M0.4 6.6 H1.6 M3.2 9.6 H12 M0.4 9.6 H1.6 " stroke="#333" stroke-width="1"/></svg>
<div class="abs t b" style="left:37px;top:573.5px;font-size:11.5px;letter-spacing:-0.3px">Resources List</div>
<svg class="abs" style="left:265px;top:578px" width="9" height="5" viewBox="0 0 9 5" ><path d="M0.5 0.5 L4.5 4.3 L8.5 0.5" stroke="#333" stroke-width="1.1" fill="none"/></svg>
<svg class="abs" style="left:288px;top:576px" width="10" height="10" viewBox="0 0 10 10" ><path d="M0.5 0.5 L9.5 9.5 M9.5 0.5 L0.5 9.5" stroke="#222" stroke-width="1.1" fill="none"/></svg>
<div class="abs" style="left:12px;top:594px;width:296px;height:37px;background:#e3e3e3;border-bottom:1px solid #d0d0d0"></div>
<div class="abs btn" style="left:18px;top:601.5px;width:66px;height:22px;"></div>
<svg class="abs" style="left:26px;top:607.5px" width="12" height="12" viewBox="0 0 12 12" ><path d="M0.8 0.8 H11.2 L7.2 5.6 V10.6 L4.8 9.4 V5.6 Z" fill="none" stroke="#333" stroke-width="1.1" stroke-linejoin="round"/></svg>
<div class="abs t " style="left:49px;top:605.5px;">Filter</div>
<div class="abs btn" style="left:90px;top:601.5px;width:28px;height:22px;"></div>
<svg class="abs" style="left:99px;top:606.5px" width="12" height="12" viewBox="0 0 12 12" ><circle cx="6" cy="6" r="2" fill="none" stroke="#333" stroke-width="1"/><path d="M6 0.8 L7 2.2 L8.8 1.6 L9.2 3.3 L10.9 3.7 L10.2 5.3 L11.3 6.6 L9.9 7.6 L10.2 9.4 L8.5 9.5 L7.6 11 L6 10.1 L4.4 11 L3.5 9.5 L1.8 9.4 L2.1 7.6 L0.7 6.6 L1.8 5.3 L1.1 3.7 L2.8 3.3 L3.2 1.6 L5 2.2 Z" fill="none" stroke="#333" stroke-width="1.05" stroke-linejoin="round"/></svg>
<div class="abs" style="left:124px;top:601px;width:1px;height:25px;background:#bdbdbd"></div>
<div class="abs btn" style="left:129px;top:601.5px;width:79px;height:22px;"></div>
<div class="abs t " style="left:140px;top:605.5px;font-size:13px;color:#333">?</div>
<div class="abs t " style="left:160px;top:605.5px;">Legend</div>
<div class="abs" style="left:15px;top:634.5px;width:290px;height:19.5px;border:1px solid #bcbcbc;border-radius:4px;background:#f3f3f3;box-sizing:border-box"></div>
<svg class="abs" style="left:22px;top:639px" width="12" height="12" viewBox="0 0 12 12" ><path d="M10.8 6 A4.8 4.8 0 1 1 8.6 2" fill="none" stroke="#333" stroke-width="1.1"/><path d="M7.6 0.2 L9 2.2 L6.8 3.2" fill="none" stroke="#333" stroke-width="1"/><path d="M6 6 H8.4" stroke="#333" stroke-width="1.1"/><circle cx="6" cy="6" r="0.9" fill="#333"/></svg>
<div class="abs t " style="left:40px;top:637px;letter-spacing:-0.13px">Gather Accessed Resources</div>
<div class="abs grp" style="left:17px;top:661px;width:265px;height:72px"><div class="grph" style="height:24px"></div></div><svg class="abs" style="left:30px;top:670.5px" width="9" height="5" viewBox="0 0 9 5" ><path d="M0.5 0.5 L4.5 4.3 L8.5 0.5" stroke="#333" stroke-width="1" fill="none"/></svg><div class="abs t " style="left:44px;top:666.0px;">Pipeline State</div>
<div class="abs t " style="left:26px;top:693px;">Root Signature</div>
<div class="abs t " style="left:26px;top:713px;">Pipeline State</div>
<div class="abs grp" style="left:17px;top:744px;width:265px;height:111px"><div class="grph" style="height:24px"></div></div><svg class="abs" style="left:30px;top:753.5px" width="9" height="5" viewBox="0 0 9 5" ><path d="M0.5 0.5 L4.5 4.3 L8.5 0.5" stroke="#333" stroke-width="1" fill="none"/></svg><div class="abs t " style="left:44px;top:749.0px;">MS</div>
<div class="abs t " style="left:26px;top:776px;">Output</div>
<div class="abs t " style="left:26px;top:796px;">Shader</div>
<div class="abs t " style="left:26px;top:816px;">CBV 0 : MemoryDX12Upload : ConstantBufferNI</div>
<div class="abs t " style="left:26px;top:836px;">UAV Buffer 0 : g_InputBoxes</div>
<div class="abs grp" style="left:17px;top:867px;width:265px;height:52px"><div class="grph" style="height:24px"></div></div><svg class="abs" style="left:30px;top:876.5px" width="9" height="5" viewBox="0 0 9 5" ><path d="M0.5 0.5 L4.5 4.3 L8.5 0.5" stroke="#333" stroke-width="1" fill="none"/></svg><div class="abs t " style="left:44px;top:872.0px;">PS</div>
<div class="abs t " style="left:26px;top:899px;">Shader</div>
<div class="abs" style="left:17px;top:929px;width:265px;height:71px;border:1px solid #c2c2c2;border-bottom:none;border-radius:5px 5px 0 0;background:#f2f2f2"><div class="grph" style="height:24px;border-radius:5px 5px 0 0"></div></div>
<svg class="abs" style="left:30px;top:939px" width="9" height="5" viewBox="0 0 9 5" ><path d="M0.5 0.5 L4.5 4.3 L8.5 0.5" stroke="#333" stroke-width="1" fill="none"/></svg>
<div class="abs t " style="left:44px;top:934.5px;">OM</div>
<div class="abs" style="left:22px;top:959.5px;width:256.5px;height:19.5px;background:#8fa48f;border:1px dotted #2f3a2f;border-radius:3px;box-sizing:border-box"></div>
<div class="abs t " style="left:26px;top:962px;">RTV 0 : boxIndexMap</div>
<div class="abs t " style="left:26px;top:982px;">Depth : boxIndexMapDepth</div>
<div class="abs" style="left:290px;top:658px;width:16px;height:340px;background:#f2f2f2"></div>
<svg class="abs" style="left:294px;top:661px" width="7" height="5" viewBox="0 0 7 5" ><path d="M3.5 0.5 L7 4.5 H0 Z" fill="#cfcfcf"/></svg>
<svg class="abs" style="left:294px;top:988px" width="7" height="5" viewBox="0 0 7 5" ><path d="M3.5 4.5 L7 0.5 H0 Z" fill="#c4c4c4"/></svg>
<div class="abs" style="left:293px;top:671px;width:11px;height:302px;background:#dcdcdc;border-radius:5px"></div>
<div class="abs" style="left:9px;top:998px;width:302px;height:4px;background:#ebebeb"></div>
<div class="abs" style="left:14px;top:998px;width:292px;height:1px;background:#d2d2d2"></div>
<div class="abs" style="left:318px;top:565px;width:480px;height:438px;background:#000;border-radius:3px 0 0 3px"></div>
<div class="abs" style="left:798px;top:565px;width:21px;height:438px;background:#808080"></div>
<div class="abs" style="left:819px;top:565px;width:16px;height:438px;background:#f2f2f2"></div>
<svg class="abs" style="left:823.5px;top:569px" width="7" height="5" viewBox="0 0 7 5" ><path d="M3.5 0.5 L7 4.5 H0 Z" fill="#cfcfcf"/></svg>
<svg class="abs" style="left:823.5px;top:993px" width="7" height="5" viewBox="0 0 7 5" ><path d="M3.5 4.5 L7 0.5 H0 Z" fill="#c4c4c4"/></svg>
<div class="abs" style="left:822px;top:981px;width:11px;height:8px;background:#dcdcdc;border-radius:4px"></div>
<div class="abs" style="left:537px;top:744px;width:41px;height:42px;background:#ff0000"></div>
<div class="abs" style="left:344px;top:935px;width:43px;height:42px;background:#ff0000"></div>
<div class="abs" style="left:354px;top:943px;width:33px;height:34px;background:#990000"></div>
<div class="abs" style="left:842.5px;top:572px;width:904.5px;height:424px;background:#f2f2f2;border-radius:5px;box-shadow:-1px 1px 2px rgba(0,0,0,.3);overflow:hidden"></div>
<div class="abs" style="left:842.5px;top:572px;width:904.5px;height:25px;background:#8fa48f;border-radius:5px 5px 0 0"></div>
<svg class="abs" style="left:849.3px;top:579.5px" width="12" height="10" viewBox="0 0 12 10" ><rect x="0" y="6.6" width="2.2" height="3.4" fill="#222"/><rect x="3.2" y="3.6" width="2.2" height="6.4" fill="#222"/><rect x="6.4" y="0" width="2.2" height="10" fill="#222"/><rect x="9.6" y="3" width="2.2" height="7" fill="#222"/></svg>
<div class="abs t b" style="left:867px;top:576.5px;font-size:11.8px">Visualization</div>
<svg class="abs" style="left:1704px;top:581px" width="9" height="5" viewBox="0 0 9 5" ><path d="M0.5 0.5 L4.5 4.3 L8.5 0.5" stroke="#333" stroke-width="1.1" fill="none"/></svg>
<svg class="abs" style="left:1727px;top:579px" width="10" height="10" viewBox="0 0 10 10" ><path d="M0.5 0.5 L9.5 9.5 M9.5 0.5 L0.5 9.5" stroke="#222" stroke-width="1.1" fill="none"/></svg>
<div class="abs grp" style="left:848px;top:604px;width:873px;height:154px"><div class="grph" style="height:24px"></div></div><svg class="abs" style="left:861px;top:613.5px" width="9" height="5" viewBox="0 0 9 5" ><path d="M0.5 0.5 L4.5 4.3 L8.5 0.5" stroke="#333" stroke-width="1" fill="none"/></svg><div class="abs t " style="left:875px;top:609.0px;">Properties</div>
<div class="abs t " style="left:853px;top:637px;">Visualization</div>
<div class="abs" style="left:940px;top:635px;width:777px;height:19px;border:1px solid #b9b9b9;border-radius:4px;background:#f3f3f3;box-sizing:border-box"></div><div class="abs t " style="left:945px;top:637.0px;">Image</div><svg class="abs" style="left:1701px;top:642.0px" width="8" height="5" viewBox="0 0 8 5" ><path d="M0.5 0.5 L4.0 4.3 L7.5 0.5" stroke="#333" stroke-width="1" fill="none"/></svg>
<div class="abs" style="left:853px;top:656px;width:864px;height:1px;background:#a9a9a9"></div>
<div class="abs t " style="left:853px;top:662px;">Format</div>
<div class="abs" style="left:940px;top:660px;width:777px;height:19px;border:1px solid #b9b9b9;border-radius:4px;background:#f3f3f3;box-sizing:border-box"></div><div class="abs t " style="left:945px;top:662.0px;">R32_SINT</div><svg class="abs" style="left:1701px;top:667.0px" width="8" height="5" viewBox="0 0 8 5" ><path d="M0.5 0.5 L4.0 4.3 L7.5 0.5" stroke="#333" stroke-width="1" fill="none"/></svg>
<div class="abs" style="left:853px;top:681px;width:864px;height:1px;background:#a9a9a9"></div>
<div class="abs t " style="left:853px;top:689px;">Aspect Ratio</div>
<div class="abs" style="left:940px;top:685px;width:777px;height:23px;border:1px solid #b9b9b9;border-radius:4px;background:#f3f3f3;box-sizing:border-box"></div><div class="abs t " style="left:946px;top:689.0px;">100%</div><svg class="abs" style="left:1701px;top:694.0px" width="8" height="5" viewBox="0 0 8 5" ><path d="M0.5 0.5 L4.0 4.3 L7.5 0.5" stroke="#333" stroke-width="1" fill="none"/></svg>
<div class="abs" style="left:853px;top:710px;width:864px;height:1px;background:#a9a9a9"></div>
<div class="abs t " style="left:853px;top:715px;letter-spacing:0.15px">Flip Horizontally</div>
<div class="abs" style="left:943px;top:717px;width:11px;height:11px;border:1px solid #333;border-radius:2px;box-sizing:border-box;background:#f4f4f4"></div>
<div class="abs" style="left:853px;top:733px;width:864px;height:1px;background:#a9a9a9"></div>
<div class="abs t " style="left:853px;top:738px;">Flip Vertically</div>
<div class="abs" style="left:943px;top:740px;width:11px;height:11px;border:1px solid #333;border-radius:2px;box-sizing:border-box;background:#f4f4f4"></div>
<div class="abs" style="left:938px;top:630px;width:1px;height:128px;background:#ececec"></div>
<div class="abs grp" style="left:848px;top:769px;width:873px;height:88px"><div class="grph" style="height:24px"></div></div><svg class="abs" style="left:861px;top:778.5px" width="9" height="5" viewBox="0 0 9 5" ><path d="M0.5 0.5 L4.5 4.3 L8.5 0.5" stroke="#333" stroke-width="1" fill="none"/></svg><div class="abs t " style="left:875px;top:774.0px;">Background</div>
<div class="abs" style="left:849px;top:795px;width:873px;height:30px;background:#e3e3e3"></div>
<svg class="abs" style="left:856px;top:804px" width="8" height="11" viewBox="0 0 8 11" ><rect x="0" y="0" width="1.9" height="1.9" fill="#2a2a2a"/><rect x="5.2" y="0" width="1.9" height="1.9" fill="#2a2a2a"/><rect x="0" y="4.1" width="1.9" height="1.9" fill="#2a2a2a"/><rect x="5.2" y="4.1" width="1.9" height="1.9" fill="#2a2a2a"/><rect x="0" y="8.2" width="1.9" height="1.9" fill="#2a2a2a"/><rect x="5.2" y="8.2" width="1.9" height="1.9" fill="#2a2a2a"/></svg>
<div class="abs" style="left:873px;top:797px;width:25px;height:25px;background:#c4c4c4;border-radius:4px"></div>
<svg class="abs" style="left:880px;top:804px" width="11" height="11" viewBox="0 0 11 11" ><rect x="0.6" y="0.6" width="9.8" height="9.8" fill="none" stroke="#333" stroke-width="1"/><path d="M3.8 0.6 V10.4 M7.2 0.6 V10.4 M0.6 3.8 H10.4 M0.6 7.2 H10.4" stroke="#333" stroke-width="1"/></svg>
<div class="abs t " style="left:853px;top:834px;">Color</div>
<div class="abs" style="left:883px;top:830px;width:834px;height:23px;border:1px solid #b9b9b9;border-radius:4px;background:#f3f3f3;box-sizing:border-box"></div><div class="abs t " style="left:889px;top:834.0px;">Blue</div><svg class="abs" style="left:1701px;top:839.0px" width="8" height="5" viewBox="0 0 8 5" ><path d="M0.5 0.5 L4.0 4.3 L7.5 0.5" stroke="#333" stroke-width="1" fill="none"/></svg>
<div class="abs" style="left:848px;top:868px;width:873px;height:130px;border:1px solid #c2c2c2;border-bottom:none;border-radius:5px 5px 0 0;background:#f2f2f2"><div class="grph" style="height:23px;border-radius:5px 5px 0 0"></div></div>
<svg class="abs" style="left:861px;top:877.5px" width="9" height="5" viewBox="0 0 9 5" ><path d="M0.5 0.5 L4.5 4.3 L8.5 0.5" stroke="#333" stroke-width="1" fill="none"/></svg>
<div class="abs t " style="left:875px;top:873px;">Histogram</div>
<div class="abs" style="left:849px;top:893px;width:873px;height:30px;background:#e3e3e3"></div>
<svg class="abs" style="left:856px;top:903px" width="8" height="11" viewBox="0 0 8 11" ><rect x="0" y="0" width="1.9" height="1.9" fill="#2a2a2a"/><rect x="5.2" y="0" width="1.9" height="1.9" fill="#2a2a2a"/><rect x="0" y="4.1" width="1.9" height="1.9" fill="#2a2a2a"/><rect x="5.2" y="4.1" width="1.9" height="1.9" fill="#2a2a2a"/><rect x="0" y="8.2" width="1.9" height="1.9" fill="#2a2a2a"/><rect x="5.2" y="8.2" width="1.9" height="1.9" fill="#2a2a2a"/></svg>
<div class="abs btn" style="left:873px;top:896px;width:23px;height:23px;"></div>
<svg class="abs" style="left:879px;top:904px" width="13" height="8" viewBox="0 0 13 8" ><path d="M0.6 0.5 V7.5 M12.4 0.5 V7.5 M0.6 4 H12.4 M3 2.2 L1 4 L3 5.8 M10 2.2 L12 4 L10 5.8" fill="none" stroke="#333" stroke-width="1"/></svg>
<div class="abs btn" style="left:903px;top:896px;width:35px;height:23px;"></div>
<div class="abs t mono" style="left:908px;top:900.5px;font-size:9.5px">[0,1]</div>
<div class="abs" style="left:857px;top:931px;width:285px;height:51px;background:#f4b4b4;border:1.5px solid #f85555;border-bottom:none;box-sizing:border-box"></div>
<div class="abs" style="left:852px;top:982px;width:868px;height:1px;background:#f1dede"></div>
<div class="abs" style="left:852px;top:983px;width:868px;height:2px;background:#ececec"></div>
<div class="abs" style="left:860px;top:988px;width:411px;height:10px;border:1px solid #bcbcbc;border-radius:4px 4px 0 0;border-bottom:none;box-sizing:border-box"></div>
<div class="abs" style="left:1273px;top:988px;width:409px;height:10px;border:1px solid #bcbcbc;border-radius:4px 4px 0 0;border-bottom:none;box-sizing:border-box"></div>
<div class="abs" style="left:1704px;top:993px;width:12px;height:3px;border:1px solid #555;border-bottom:none;box-sizing:border-box"></div>
<svg class="abs" style="left:1687px;top:992px" width="6" height="4" viewBox="0 0 6 4" ><path d="M0.5 4 A2.5 2.5 0 0 1 5.5 4" fill="none" stroke="#555" stroke-width="0.9"/></svg>
<div class="abs" style="left:1730px;top:598px;width:16px;height:398px;background:#f2f2f2"></div>
<svg class="abs" style="left:1734px;top:604px" width="7" height="5" viewBox="0 0 7 5" ><path d="M3.5 0.5 L7 4.5 H0 Z" fill="#cfcfcf"/></svg>
<svg class="abs" style="left:1734px;top:985px" width="7" height="5" viewBox="0 0 7 5" ><path d="M3.5 4.5 L7 0.5 H0 Z" fill="#c4c4c4"/></svg>
<div class="abs" style="left:1732px;top:614px;width:12px;height:345px;background:#dcdcdc;border-radius:5px"></div>
<div class="abs" style="left:840px;top:996px;width:910px;height:6px;background:#ebebeb"></div>
<div class="abs" style="left:844px;top:996px;width:902px;height:1px;background:#d2d2d2"></div>
<div class="abs" style="left:1756px;top:572px;width:149px;height:424px;background:#f2f2f2;border-radius:5px;box-shadow:0 1px 2px rgba(0,0,0,.35);overflow:hidden"></div>
<div class="abs" style="left:1756px;top:572px;width:149px;height:25px;background:#8fa48f;border-radius:5px 5px 0 0"></div>
<svg class="abs" style="left:1763.5px;top:579px" width="11" height="10.4" viewBox="0 0 11 10.4" ><rect x="0.6" y="0.6" width="9.8" height="9.2" rx="1" fill="none" stroke="#333" stroke-width="1.1"/><path d="M1 9.2 L4.2 5.6 L7.4 9.4 M5.8 7.4 L7.2 6 L10 8.8" fill="none" stroke="#333" stroke-width="1"/><circle cx="7.5" cy="3.2" r="0.9" fill="none" stroke="#333" stroke-width="0.9"/></svg>
<div class="abs t b" style="left:1781px;top:576.5px;font-size:11.8px">Pixel Details</div>
<svg class="abs" style="left:1862px;top:581px" width="9" height="5" viewBox="0 0 9 5" ><path d="M0.5 0.5 L4.5 4.3 L8.5 0.5" stroke="#333" stroke-width="1.1" fill="none"/></svg>
<svg class="abs" style="left:1885px;top:579px" width="10" height="10" viewBox="0 0 10 10" ><path d="M0.5 0.5 L9.5 9.5 M9.5 0.5 L0.5 9.5" stroke="#222" stroke-width="1.1" fill="none"/></svg>
<div class="abs grp" style="left:1761px;top:604px;width:118px;height:120px"><div class="grph" style="height:24px"></div></div><svg class="abs" style="left:1774px;top:613.5px" width="9" height="5" viewBox="0 0 9 5" ><path d="M0.5 0.5 L4.5 4.3 L8.5 0.5" stroke="#333" stroke-width="1" fill="none"/></svg><div class="abs t " style="left:1788px;top:609.0px;">Coordinates</div>
<div class="abs t " style="left:1766px;top:637.0px;">X</div>
<div class="abs" style="left:1779.5px;top:633.5px;width:96.5px;height:21px;border:1px solid #b3b3b3;border-radius:4px;background:#f3f3f3;box-sizing:border-box"></div>
<div class="abs t " style="left:1786px;top:637.0px;font-size:11px">0</div>
<div class="abs t " style="left:1766px;top:658.95px;">Y</div>
<div class="abs" style="left:1779.5px;top:655.45px;width:96.5px;height:21px;border:1px solid #b3b3b3;border-radius:4px;background:#f3f3f3;box-sizing:border-box"></div>
<div class="abs t " style="left:1786px;top:658.95px;font-size:11px">0</div>
<div class="abs t " style="left:1766px;top:680.9px;">U</div>
<div class="abs" style="left:1779.5px;top:677.4px;width:96.5px;height:21px;border:1px solid #b3b3b3;border-radius:4px;background:#f3f3f3;box-sizing:border-box"></div>
<div class="abs t " style="left:1786px;top:680.9px;font-size:11px">0.001953</div>
<div class="abs t " style="left:1766px;top:702.85px;">V</div>
<div class="abs" style="left:1779.5px;top:699.35px;width:96.5px;height:21px;border:1px solid #b3b3b3;border-radius:4px;background:#f3f3f3;box-sizing:border-box"></div>
<div class="abs t " style="left:1786px;top:702.85px;font-size:11px">0.001953</div>
<div class="abs grp" style="left:1761px;top:735px;width:118px;height:97px"><div class="grph" style="height:24px"></div></div><svg class="abs" style="left:1774px;top:744.5px" width="9" height="5" viewBox="0 0 9 5" ><path d="M0.5 0.5 L4.5 4.3 L8.5 0.5" stroke="#333" stroke-width="1" fill="none"/></svg><div class="abs t " style="left:1788px;top:740.0px;">Channels</div>
<div class="abs" style="left:1762px;top:761px;width:118px;height:22px;background:#e3e3e3"></div>
<svg class="abs" style="left:1770px;top:767px" width="8" height="11" viewBox="0 0 8 11" ><rect x="0" y="0" width="1.9" height="1.9" fill="#2a2a2a"/><rect x="5.2" y="0" width="1.9" height="1.9" fill="#2a2a2a"/><rect x="0" y="4.1" width="1.9" height="1.9" fill="#2a2a2a"/><rect x="5.2" y="4.1" width="1.9" height="1.9" fill="#2a2a2a"/><rect x="0" y="8.2" width="1.9" height="1.9" fill="#2a2a2a"/><rect x="5.2" y="8.2" width="1.9" height="1.9" fill="#2a2a2a"/></svg>
<div class="abs btn" style="left:1786px;top:763px;width:20px;height:17px;"></div>
<div class="abs t " style="left:1790px;top:765px;">0x</div>
<div class="abs t " style="left:1773px;top:792.5px;">R</div>
<div class="abs t " style="left:1799px;top:792.5px;">-1</div>
<svg class="abs" style="left:1770px;top:817px" width="6" height="8" viewBox="0 0 6 8" ><path d="M5.5 0.5 V7.5 L0.5 4 Z" fill="#d0d0d0"/></svg>
<svg class="abs" style="left:1865px;top:817px" width="6" height="8" viewBox="0 0 6 8" ><path d="M0.5 0.5 V7.5 L5.5 4 Z" fill="#c9c9c9"/></svg>
<div class="abs" style="left:1781px;top:816px;width:77px;height:11px;background:#dcdcdc;border-radius:5px"></div>
<div class="abs grp" style="left:1761px;top:843px;width:118px;height:124px"><div class="grph" style="height:24px"></div></div><svg class="abs" style="left:1774px;top:852.5px" width="9" height="5" viewBox="0 0 9 5" ><path d="M0.5 0.5 L4.5 4.3 L8.5 0.5" stroke="#333" stroke-width="1" fill="none"/></svg><div class="abs t " style="left:1788px;top:848.0px;">Zoom</div>
<svg class="abs" style="left:1776.5px;top:873.5px" width="89" height="90" viewBox="0 0 89 90" ><rect width="89" height="90" fill="#000"/><path d="M10.1 0 V90 M0 10.1 H89" stroke="#9a9a9a" stroke-width="0.8" stroke-dasharray="1 1"/><path d="M20.2 0 V90 M0 20.2 H89" stroke="#9a9a9a" stroke-width="0.8" stroke-dasharray="1 1"/><path d="M30.3 0 V90 M0 30.3 H89" stroke="#9a9a9a" stroke-width="0.8" stroke-dasharray="1 1"/><path d="M40.4 0 V90 M0 40.4 H89" stroke="#9a9a9a" stroke-width="0.8" stroke-dasharray="1 1"/><path d="M50.5 0 V90 M0 50.5 H89" stroke="#9a9a9a" stroke-width="0.8" stroke-dasharray="1 1"/><path d="M60.6 0 V90 M0 60.6 H89" stroke="#9a9a9a" stroke-width="0.8" stroke-dasharray="1 1"/><path d="M70.7 0 V90 M0 70.7 H89" stroke="#9a9a9a" stroke-width="0.8" stroke-dasharray="1 1"/><path d="M80.8 0 V90 M0 80.8 H89" stroke="#9a9a9a" stroke-width="0.8" stroke-dasharray="1 1"/><rect x="0.4" y="0.4" width="88.2" height="89.2" fill="none" stroke="#8f8f8f" stroke-width="0.8" stroke-dasharray="1 1"/><rect x="0.5" y="0.5" width="9" height="9" fill="none" stroke="#c85a10" stroke-width="1.2"/><rect x="1.5" y="1.5" width="7" height="7" fill="none" stroke="#ddd" stroke-width="0.7" stroke-dasharray="1 1"/></svg>
<div class="abs" style="left:1761px;top:978px;width:118px;height:20px;border:1px solid #c2c2c2;border-bottom:none;border-radius:5px 5px 0 0;background:#e4e4e4"></div>
<svg class="abs" style="left:1774px;top:988px" width="9" height="5" viewBox="0 0 9 5" ><path d="M0.5 0.5 L4.5 4.3 L8.5 0.5" stroke="#333" stroke-width="1" fill="none"/></svg>
<div class="abs t " style="left:1788px;top:983px;">Actions</div>
<div class="abs" style="left:1753px;top:996px;width:155px;height:6px;background:#ebebeb"></div>
<div class="abs" style="left:1758px;top:996px;width:145px;height:1px;background:#d2d2d2"></div>
<div class="abs" style="left:1886px;top:598px;width:18px;height:398px;background:#f2f2f2"></div>
<svg class="abs" style="left:1892px;top:604px" width="7" height="5" viewBox="0 0 7 5" ><path d="M3.5 0.5 L7 4.5 H0 Z" fill="#cfcfcf"/></svg>
<svg class="abs" style="left:1892px;top:985px" width="7" height="5" viewBox="0 0 7 5" ><path d="M3.5 4.5 L7 0.5 H0 Z" fill="#c4c4c4"/></svg>
<div class="abs" style="left:1890px;top:614px;width:12px;height:314px;background:#dcdcdc;border-radius:5px"></div>
<div class="abs" style="left:0px;top:1007px;width:1919px;height:1px;background:#cfcfcf"></div>
<div class="abs" style="left:0px;top:1008px;width:1919px;height:20px;background:#ebebeb"></div>
<div class="abs t " style="left:9.3px;top:1010px;font-size:10.9px">X: 127</div>
<div class="abs t " style="left:45.8px;top:1010px;font-size:10.9px">Y: 128</div>
<div class="abs t " style="left:82.6px;top:1010px;font-size:10.9px">U: 0.498</div>
<div class="abs t " style="left:131.9px;top:1010px;font-size:10.9px">V: 0.502</div>
<div class="abs" style="left:176.2px;top:1008.2px;width:39.5px;height:18.2px;border:2px solid #22c02e;box-sizing:border-box"></div>
<div class="abs t " style="left:180.5px;top:1010px;font-size:10.9px">R: 400</div>
<div class="abs t " style="left:216.8px;top:1010px;font-size:10.9px">(0x190)</div>
<div class="abs" style="left:4.5px;top:1003px;width:1.2px;height:25px;background:#8e8e8e"></div>
<div class="abs" style="left:3px;top:1003px;width:1.5px;height:25px;background:rgba(0,0,0,.1)"></div>
<svg class="abs" style="left:0;top:0;pointer-events:none" width="1919" height="1028"><path d="M215.5 1009 L318 933.8" stroke="#21bb2d" stroke-width="1" opacity="0.8" fill="none"/><path d="M318 933.8 L547 766" stroke="#21bb2d" stroke-width="1.9" fill="none"/><circle cx="550.5" cy="763.5" r="4.2" fill="none" stroke="#21bb2d" stroke-width="1.8"/></svg>
</body></html>
